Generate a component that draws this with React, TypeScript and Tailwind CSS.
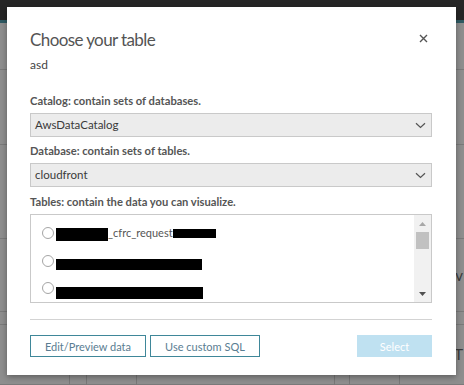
import React from 'react'

function Chevron() {
  return (
    <svg width="11" height="7" viewBox="0 0 11 7" fill="none">
      <path d="M1 1.2l4.5 4.3 4.5-4.3" stroke="#555" strokeWidth="1.2" />
    </svg>
  )
}

function SelectBox({ value }: { value: string }) {
  return (
    <div className="flex items-center justify-between h-[24px] border border-[#c9c9c9] bg-[#ececec] pl-[4px] pr-[5px]">
      <span className="text-[11.5px] text-[#3a3a3a] leading-none">{value}</span>
      <Chevron />
    </div>
  )
}

function Radio() {
  return <span className="w-[12px] h-[12px] shrink-0 rounded-full border border-[#a5a5a5] bg-white" />
}

// rows of the page that sits behind the dialog
const pageRows = [
  { h: 47, text: '' },
  { h: 75, text: '' },
  { h: 94, text: '' },
  { h: 73, text: 'rv' },
  { h: 13, text: '' },
  { h: 60, text: 'T' },
]

export default function App() {
  return (
    <div className="relative w-[464px] h-[385px] overflow-hidden bg-[#8e8e8e] font-['Lato',sans-serif]">
      {/* page behind the overlay */}
      <div className="flex flex-col h-full">
        <div className="h-[20px] shrink-0 bg-[#262626]" />
        <div className="h-[3px] shrink-0 bg-[#2f5a63]" />
        {pageRows.map((r, i) => (
          <div
            key={i}
            className="shrink-0 flex items-center justify-end border-b border-[#7a7a7a] pr-[1px]"
            style={{ height: r.h }}
          >
            {r.text && <span className="text-[15px] text-[#3a3a3a] leading-none">{r.text}</span>}
          </div>
        ))}
      </div>
      <div className="absolute left-0 right-0 bottom-0 h-[10px] flex">
        <div className="w-[70px] border-r border-[#777]" />
        <div className="w-[17px] border-r border-[#777]" />
        <div className="w-[50px] border-r border-[#777]" />
        <div className="w-[198px] border-r border-[#777]" />
        <div className="w-[15px] border-r border-[#777]" />
        <div className="w-[50px] border-r border-[#777]" />
      </div>

      {/* modal */}
      <div className="absolute left-[7px] top-[7px] w-[449px] h-[368px] bg-white shadow-[0_2px_6px_rgba(0,0,0,0.35)] pt-[22px] pl-[23px] pr-[24px]">
        <div className="flex items-start justify-between">
          <h1 className="text-[17px] leading-[22px] text-[#545454] tracking-[-0.6px]">Choose your table</h1>
          <button className="mt-[5px] mr-[4px]" aria-label="Close">
            <svg width="9" height="9" viewBox="0 0 9 9">
              <path d="M1 1l7 7M8 1l-7 7" stroke="#555" strokeWidth="1.4" />
            </svg>
          </button>
        </div>
        <p className="mt-[6px] text-[12px] leading-[16px] text-[#444]">asd</p>

        <p className="mt-[20px] text-[11.2px] leading-[16px] font-bold text-[#555]">Catalog: contain sets of databases.</p>
        <div className="mt-[4px]">
          <SelectBox value="AwsDataCatalog" />
        </div>

        <p className="mt-[6px] text-[11.2px] leading-[16px] font-bold text-[#555]">Database: contain sets of tables.</p>
        <div className="mt-[4px]">
          <SelectBox value="cloudfront" />
        </div>

        <p className="mt-[7px] text-[11.2px] leading-[16px] font-bold text-[#555]">Tables: contain the data you can visualize.</p>
        <div className="mt-[4px] h-[89px] border border-[#c9c9c9] flex overflow-hidden">
          <div className="flex-1 pt-[4px] pl-[11px] flex flex-col">
            <div className="h-[28px] flex items-center">
              <Radio />
              <span className="ml-[2px] mt-[3px] w-[52px] h-[13px] bg-black" />
              <span className="text-[11px] leading-none text-[#555]">_cfrc_request</span>
              <span className="mt-[1px] w-[43px] h-[9px] bg-black" />
            </div>
            <div className="h-[28px] flex items-center">
              <Radio />
              <span className="ml-[2px] mt-[7px] w-[146px] h-[11px] bg-black" />
            </div>
            <div className="h-[28px] flex items-center">
              <Radio />
              <span className="ml-[2px] mt-[10px] w-[147px] h-[12px] bg-black" />
            </div>
          </div>
          <div className="w-[17px] bg-[#f1f1f1] flex flex-col">
            <div className="h-[17px] flex items-center justify-center">
              <svg width="7" height="4" viewBox="0 0 7 4"><path d="M0 4L3.5 0 7 4z" fill="#a8a8a8" /></svg>
            </div>
            <div className="h-[17px] mx-[2px] bg-[#c1c1c1]" />
            <div className="flex-1" />
            <div className="h-[17px] flex items-center justify-center">
              <svg width="7" height="4" viewBox="0 0 7 4"><path d="M0 0h7L3.5 4z" fill="#505050" /></svg>
            </div>
          </div>
        </div>

        <div className="mt-[16px] h-px bg-[#d3d3d3]" />

        <div className="mt-[15px] flex items-center">
          <button className="w-[116px] h-[22px] border border-[#3f8799] text-[11px] text-[#5a7d92] leading-none">
            Edit/Preview data
          </button>
          <button className="ml-[4px] w-[110px] h-[22px] border border-[#3f8799] text-[11px] text-[#5a7d92] leading-none">
            Use custom SQL
          </button>
          <div className="flex-1" />
          <button className="w-[75px] h-[22px] bg-[#bfe1f1] text-[11px] text-white leading-none">Select</button>
        </div>
      </div>
    </div>
  )
}
